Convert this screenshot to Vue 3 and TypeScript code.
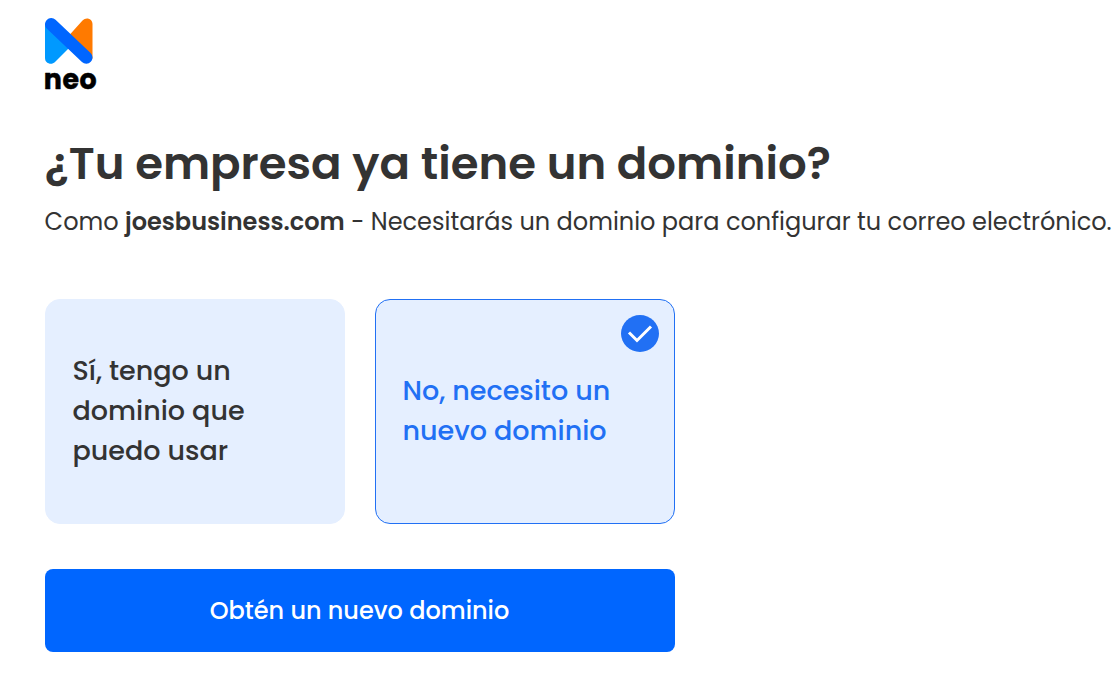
<script setup lang="ts">
import { ref } from 'vue'

interface Choice {
  id: string
  lines: string[]
}

const choices: Choice[] = [
  { id: 'own', lines: ['Sí, tengo un', 'dominio que', 'puedo usar'] },
  { id: 'new', lines: ['No, necesito un', 'nuevo dominio'] },
]

const selected = ref<string>('new')
</script>

<template>
  <main class="page">
    <svg class="logo" width="52" height="76" viewBox="0 0 52 76" role="img" aria-label="neo">
      <path d="M0 6V41C0 46.500 6.500 48.500 10 45L27 28Z" fill="#0099ff" />
      <path d="M24 18.500L37.500 3.500C41 -0.500 47.500 1.500 47.500 7V42Z" fill="#ff7a00" />
      <path d="M6.250 7.250L41.250 40.500" stroke="#0066ff" stroke-width="12.500" stroke-linecap="round" />
      <text class="wordmark" x="-1.200" y="72.400" textLength="53.500" lengthAdjust="spacingAndGlyphs">neo</text>
    </svg>

    <h1 class="title">¿Tu empresa ya tiene un dominio?</h1>
    <p class="subtitle">
      <span>Como </span><strong>joesbusiness.com</strong><span> - Necesitarás un dominio para configurar tu correo electrónico.</span>
    </p>

    <div class="choices">
      <button
        v-for="choice in choices"
        :key="choice.id"
        type="button"
        class="choice"
        :class="{ active: selected === choice.id }"
        @click="selected = choice.id"
      >
        <span class="label">
          <span v-for="line in choice.lines" :key="line" class="line">{{ line }}</span>
        </span>
        <svg v-if="selected === choice.id" class="check" width="38" height="38" viewBox="0 0 38 38">
          <ellipse cx="19" cy="18.500" rx="19" ry="18.500" fill="#2170f4" />
          <path d="M8 17.500L16 25.500L30 11.500" fill="none" stroke="#fff" stroke-width="3" />
        </svg>
      </button>
    </div>

    <button type="button" class="submit">Obtén un nuevo dominio</button>
  </main>
</template>

<style>
body {
  background: #fff;
  overflow: hidden;
}
</style>

<style scoped>
.page {
  box-sizing: border-box;
  height: 696px;
  padding: 17px 0 0 45px;
  color: #333;
  font-family: Poppins, Inter, sans-serif;
}

.logo {
  display: block;
  overflow: visible;
}

.wordmark {
  font-size: 28px;
  font-weight: 700;
  letter-spacing: 0.600px;
  fill: #000;
  stroke: #000;
  stroke-width: 0.500;
  stroke-linejoin: round;
}

.title {
  margin: 37px 0 0 -0.500px;
  font-size: 45px;
  line-height: 68px;
  font-weight: 600;
  white-space: nowrap;
}

.subtitle {
  margin: 5px 0 0 -0.400px;
  font-size: 24px;
  line-height: 38px;
  white-space: nowrap;
}

.subtitle strong {
  font-weight: 600;
}

.choices {
  display: flex;
  gap: 30px;
  margin-top: 58px;
}

.choice {
  position: relative;
  display: flex;
  align-items: center;
  box-sizing: border-box;
  width: 300px;
  height: 225px;
  padding: 0 26.500px 2px;
  border: 1px solid #e5efff;
  border-radius: 15px;
  background: #e5efff;
  color: #333;
  font: inherit;
  font-size: 27px;
  font-weight: 500;
  line-height: 40px;
  text-align: left;
}

.choice.active {
  border-color: #2170f4;
  color: #2170f4;
}

.line {
  display: block;
  white-space: nowrap;
}

.check {
  position: absolute;
  top: 15px;
  right: 15px;
}

.submit {
  display: block;
  width: 630px;
  height: 83px;
  margin-top: 45px;
  padding: 0 1px 0 0;
  border: 0;
  border-radius: 8px;
  background: #0066ff;
  color: #fff;
  font: inherit;
  font-size: 24px;
  font-weight: 500;
}
</style>
